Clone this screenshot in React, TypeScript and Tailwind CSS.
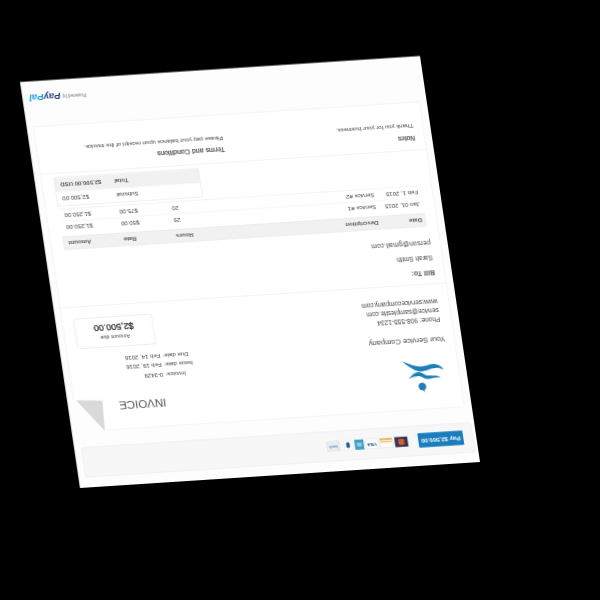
export default function App() {
  const font = { fontFamily: '"Liberation Sans", Arial, sans-serif' };
  return (
    <div className="w-[600px] h-[600px] bg-black overflow-hidden" style={font}>
      <div className="relative w-[800px] h-[812px] bg-[#fdfdfd] origin-top-left [transform:matrix(-0.5,0.0325,-0.0739,-0.5,480,462)] blur-[1.2px] text-[#444] text-[13px]">
        <div className="pt-[20px] pl-[6px] pr-[14px]">
          <div className="h-[60px] bg-[#f7f7f7] border border-[#e6e6e6] rounded-[3px] pl-[19px] flex items-center gap-[21px]">
            <div className="w-[90px] h-[29px] bg-[#1a7dbd] rounded-[2px] text-white font-bold text-[12px] flex items-center justify-center">Pay $2,500.00</div>
            <div className="flex items-center gap-[4px]">
              <div className="w-[26px] h-[20px] bg-[#3b3154] flex items-center justify-center">
                <span className="w-[12px] h-[12px] rounded-[3px] bg-[#c9642a]"></span>
              </div>
              <div className="w-[26px] h-[20px] bg-[#fbfaf3] border border-[#ddd] flex flex-col justify-end gap-[2px]">
                <span className="w-full h-[3px] bg-[#e6c98a]"></span>
                <span className="w-full h-[3px] bg-[#e0a93c]"></span>
              </div>
              <div className="w-[24px] h-[20px] bg-white border border-[#ddd] text-[#1a4d96] text-[8px] font-bold flex items-center justify-center">VISA</div>
              <div className="w-[18px] h-[20px] bg-[#3a9fc0] flex items-center justify-center">
                <span className="w-[10px] h-[8px] bg-[#8ccbe0]"></span>
              </div>
              <div className="w-[18px] h-[20px] bg-white border border-[#e2e2e2] flex items-center justify-center">
                <span className="w-[7px] h-[11px] bg-[#1c5f98] rounded-[2px]"></span>
              </div>
              <div className="w-[26px] h-[20px] ml-[4px] bg-[#e7eef3] border border-[#dde] text-[#5f8aaa] text-[7px] font-bold flex items-center justify-center">bank</div>
            </div>
          </div>
        </div>

        <div className="relative mt-[31px] ml-[14px] mr-[13px] h-[611px] bg-white border border-[#e8e8e8] rounded-[2px]">
          <div className="h-[248px] border-b border-[#e8e8e8] flex justify-between">
            <div className="pl-[18px]">
              <div className="pl-[12px] pt-[31px]">
                <svg width="80" height="66" viewBox="0 0 80 66" fill="#1d7fb8" className="overflow-visible">
                  <circle cx="47" cy="14" r="7.5" />
                  <path d="M45 8 L41 1 L48 8Z" />
                  <path d="M80 66 C66 60 56 55 47 54 C35 53 27 58 16 57 C9 56 3 51 0 45 C6 48 11 50 16 49 C27 49 35 43 47 44 C58 45 68 55 80 66Z" />
                  <path d="M72 31 C65 38 58 42 52 43 C44 43 40 36 33 35 C25 34 17 36 8 30 C16 31 24 29 33 28 C41 28 46 35 52 35 C59 35 66 33 72 31Z" />
                </svg>
              </div>
              <div className="mt-[30px] text-[15px] leading-[20px]">Your Service Company</div>
              <div className="mt-[20px] leading-[18px] pl-[4px]">
                <div>Phone: 908-555-1234</div>
                <div>service@samplesite.com</div>
                <div>www.servicecompany.com</div>
              </div>
            </div>
            <div className="w-[240px] mr-[20px] pt-[31px] relative z-10">
              <div className="ml-[78px] text-[23px] leading-[30px] text-[#555]">INVOICE</div>
              <div className="mt-[32px] leading-[19px] grid grid-cols-[72px_1fr] gap-x-[4px] text-[12px]">
                <div className="text-right">Invoice:</div>
                <div>0-3429</div>
                <div className="text-right">Issue date:</div>
                <div>Feb 19, 2016</div>
                <div className="text-right">Due date:</div>
                <div>Feb 14, 2016</div>
              </div>
              <div className="mt-[14px] ml-[82px] w-[156px] h-[60px] border border-[#dedede] bg-white flex flex-col items-center justify-center">
                <div className="text-[11px] leading-[15px]">Amount due</div>
                <div className="text-[18px] leading-[22px] text-[#111] [-webkit-text-stroke:0.4px_#111]">$2,500.00</div>
              </div>
            </div>
          </div>

          <div className="h-[267px] border-b border-[#e8e8e8] pt-[10px]">
            <div className="pl-[19px]">
              <div className="font-bold text-[14px] leading-[20px] text-[#555]">Bill To:</div>
              <div className="mt-[13px] leading-[18px]">Sarah Smith</div>
              <div className="mt-[12px] leading-[18px] tracking-[0.4px]">person@gmail.com</div>
            </div>
            <div className="ml-[21px] mt-[23px] w-[726px]">
              <div className="h-[26px] bg-[#f1f1f1] border-y border-[#e4e4e4] grid grid-cols-[95px_329px_76px_105px_121px] items-center font-bold text-[12px] text-[#555]">
                <div className="pl-[8px]">Date</div>
                <div>Description</div>
                <div className="text-right">Hours</div>
                <div className="text-right">Rate</div>
                <div className="text-right pr-[11px]">Amount</div>
              </div>
              <div className="mt-[6px] h-[25px] border-b border-[#eee] grid grid-cols-[95px_329px_76px_105px_121px] items-center text-[12px]">
                <div className="pl-[8px]">Jan 01, 2015</div>
                <div>Service #1</div>
                <div className="text-right">25</div>
                <div className="text-right">$50.00</div>
                <div className="text-right pr-[11px]">$1,250.00</div>
              </div>
              <div className="h-[25px] border-b border-[#e8e8e8] grid grid-cols-[95px_329px_76px_105px_121px] items-center text-[12px]">
                <div className="pl-[8px]">Feb 1, 2015</div>
                <div>Service #2</div>
                <div className="text-right">20</div>
                <div className="text-right">$75.00</div>
                <div className="text-right pr-[11px]">$1,250.00</div>
              </div>
              <div className="mt-[4px] ml-[435px] w-[291px] border border-[#e2e2e2] text-[12px]">
                <div className="h-[28px] grid grid-cols-[170px_1fr] items-center">
                  <div className="text-right">Subtotal</div>
                  <div className="text-right pr-[11px]">$2,500.00</div>
                </div>
                <div className="h-[28px] bg-[#f1f1f1] grid grid-cols-[170px_1fr] items-center font-bold text-[#555]">
                  <div className="text-right">Total</div>
                  <div className="text-right pr-[11px]">$2,500.00 USD</div>
                </div>
              </div>
            </div>
          </div>

          <div className="pt-[15px] pl-[19px] flex text-[12px]">
            <div className="w-[380px]">
              <div className="text-[13px] leading-[18px] [-webkit-text-stroke:0.3px_#444]">Notes</div>
              <div className="mt-[6px] leading-[18px]">Thank you for your business.</div>
            </div>
            <div>
              <div className="text-[14px] leading-[18px] [-webkit-text-stroke:0.3px_#444]">Terms and Conditions</div>
              <div className="mt-[6px] leading-[18px]">Please pay your balance upon receipt of the invoice.</div>
            </div>
          </div>

          <svg className="absolute right-[-8px] top-[-2px]" width="64" height="66" viewBox="0 0 64 66">
            <path d="M0 0 H64 V66 H0Z" fill="#fdfdfd" />
            <path d="M4 0 L0 60 L52 64Z" fill="#d9d9d9" />
          </svg>
        </div>

        <div className="mt-[46px] pr-[14px] flex items-center justify-end gap-[3px]">
          <span className="text-[9px] text-[#777]">Powered by</span>
          <span className="text-[19px] leading-[24px] font-bold italic">
            <span className="text-[#253b80]">Pay</span>
            <span className="text-[#179bd7]">Pal</span>
          </span>
        </div>
      </div>
    </div>
  );
}
